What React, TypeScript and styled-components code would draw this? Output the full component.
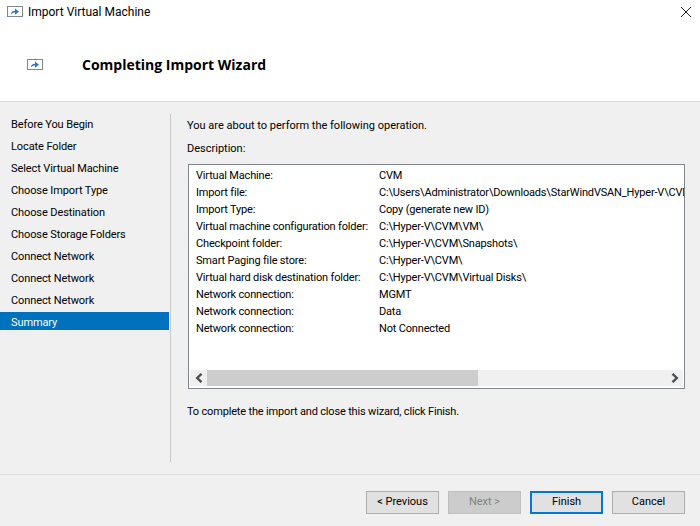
import React from "react";
import styled, { createGlobalStyle } from "styled-components";

const GlobalStyle = createGlobalStyle`
  html, body {
    margin: 0;
    padding: 0;
    background: #f0f0f0;
  }
  body {
    font-family: Roboto, "Open Sans", "Liberation Sans", sans-serif;
    font-size: 11px;
    color: #000000;
  }
`;

const steps = [
  "Before You Begin",
  "Locate Folder",
  "Select Virtual Machine",
  "Choose Import Type",
  "Choose Destination",
  "Choose Storage Folders",
  "Connect Network",
  "Connect Network",
  "Connect Network",
  "Summary",
];

const details = [
  ["Virtual Machine:", "CVM"],
  ["Import file:", "C:\\Users\\Administrator\\Downloads\\StarWindVSAN_Hyper-V\\CVM"],
  ["Import Type:", "Copy (generate new ID)"],
  ["Virtual machine configuration folder:", "C:\\Hyper-V\\CVM\\VM\\"],
  ["Checkpoint folder:", "C:\\Hyper-V\\CVM\\Snapshots\\"],
  ["Smart Paging file store:", "C:\\Hyper-V\\CVM\\"],
  ["Virtual hard disk destination folder:", "C:\\Hyper-V\\CVM\\Virtual Disks\\"],
  ["Network connection:", "MGMT"],
  ["Network connection:", "Data"],
  ["Network connection:", "Not Connected"],
];

const ImportIcon = () => (
  <svg width="16" height="11" viewBox="0 0 16 11">
    <rect x="0.5" y="0.5" width="15" height="10" fill="#ffffff" stroke="#7f8790" />
    <path d="M4 8.5C4 6 5.5 4.8 8 4.8V2.5l4 3.2-4 3V6.6C6.3 6.6 5.2 7.2 4 8.5z" fill="#2f75c8" />
  </svg>
);

const CloseIcon = () => (
  <svg width="10" height="10" viewBox="0 0 10 10">
    <path d="M0 0l10 10M10 0L0 10" fill="none" stroke="#1a1a1a" strokeWidth="1" />
  </svg>
);

const Chevron = ({ dir }: { dir: "left" | "right" }) => (
  <svg width="8" height="10" viewBox="0 0 8 10">
    <path
      d={dir === "left" ? "M6.5 0.8L2.2 5l4.3 4.2" : "M1.5 0.8L5.8 5 1.5 9.2"}
      fill="none"
      stroke="#505050"
      strokeWidth="2.4"
    />
  </svg>
);

export default function App() {
  return (
    <Window>
      <GlobalStyle />
      <TopArea>
        <TitleBar>
          <ImportIcon />
          <TitleText>Import Virtual Machine</TitleText>
          <CloseSlot>
            <CloseIcon />
          </CloseSlot>
        </TitleBar>
        <Banner>
          <ImportIcon />
          <Heading>Completing Import Wizard</Heading>
        </Banner>
      </TopArea>
      <Body>
        <Nav>
          {steps.map((step, i) => (
            <NavItem key={i} $active={step === "Summary"}>
              {step}
            </NavItem>
          ))}
        </Nav>
        <Content>
          <Intro>You are about to perform the following operation.</Intro>
          <DescLabel>Description:</DescLabel>
          <DetailBox>
            <DetailList>
              {details.map(([label, value], i) => (
                <DetailRow key={i}>
                  <span>{label}</span>
                  <DetailValue>{value}</DetailValue>
                </DetailRow>
              ))}
            </DetailList>
            <ScrollBar>
              <ScrollButton>
                <Chevron dir="left" />
              </ScrollButton>
              <ScrollTrack>
                <ScrollThumb />
              </ScrollTrack>
              <ScrollButton>
                <Chevron dir="right" />
              </ScrollButton>
            </ScrollBar>
          </DetailBox>
          <Outro>To complete the import and close this wizard, click Finish.</Outro>
        </Content>
      </Body>
      <Footer>
        <WizardButton>&lt; Previous</WizardButton>
        <WizardButton disabled>Next &gt;</WizardButton>
        <FinishButton>Finish</FinishButton>
        <WizardButton>Cancel</WizardButton>
      </Footer>
    </Window>
  );
}

const Window = styled.div`
  width: 700px;
  height: 526px;
  display: flex;
  flex-direction: column;
  overflow: hidden;
  background: #f0f0f0;
`;

const TopArea = styled.header`
  height: 101px;
  background: #ffffff;
  border-bottom: 1px solid #d9d9d9;
  flex-shrink: 0;
`;

const TitleBar = styled.div`
  height: 23px;
  padding: 0 9px 0 7px;
  display: flex;
  align-items: center;
  gap: 5px;
`;

const TitleText = styled.span`
  font-size: 12px;
`;

const CloseSlot = styled.div`
  margin-left: auto;
  display: flex;
`;

const Banner = styled.div`
  margin-top: 32px;
  padding-left: 27px;
  display: flex;
  align-items: center;
  gap: 39px;
`;

const Heading = styled.h1`
  margin: 0;
  font-family: "Open Sans", sans-serif;
  font-size: 14px;
  font-weight: 700;
  color: #000000;
`;

const Body = styled.main`
  height: 372px;
  display: flex;
  flex-shrink: 0;
`;

const Nav = styled.nav`
  width: 169px;
  margin: 10px 2px 0 0;
  height: 348px;
  display: flex;
  flex-direction: column;
  position: relative;
  letter-spacing: -0.1px;
  &::after {
    content: "";
    position: absolute;
    top: 2px;
    bottom: -2px;
    right: -2px;
    width: 1px;
    background: #c8c8c8;
  }
`;

const NavItem = styled.div<{ $active?: boolean }>`
  height: 18px;
  line-height: 22px;
  margin: 2px 0;
  padding-left: 11px;
  background: ${(p) => (p.$active ? "#0071bc" : "transparent")};
  color: ${(p) => (p.$active ? "#ffffff" : "#000000")};
`;

const Content = styled.section`
  flex: 1;
  padding: 15px 15px 0 16px;
  min-width: 0;
`;

const Intro = styled.p`
  margin: 0;
  line-height: 17px;
`;

const DescLabel = styled.p`
  margin: 6px 0 0;
  line-height: 17px;
`;

const DetailBox = styled.div`
  margin: 7px 0 0 1px;
  height: 225px;
  box-sizing: border-box;
  border: 1px solid #82878f;
  background: #ffffff;
  display: flex;
  flex-direction: column;
  overflow: hidden;
`;

const DetailList = styled.div`
  flex: 1;
  padding: 2px 0 0 7px;
  overflow: hidden;
`;

const DetailRow = styled.div`
  display: grid;
  grid-template-columns: 183px 1fr;
  height: 17px;
  line-height: 17px;
  white-space: nowrap;
  letter-spacing: -0.17px;
`;

const DetailValue = styled.span`
  overflow: hidden;
`;

const ScrollBar = styled.div`
  height: 16px;
  margin: 0 1px 2px;
  display: flex;
  background: #f0f0f0;
`;

const ScrollButton = styled.div`
  width: 17px;
  display: flex;
  align-items: center;
  justify-content: center;
`;

const ScrollTrack = styled.div`
  flex: 1;
`;

const ScrollThumb = styled.div`
  width: 271px;
  height: 100%;
  background: #cdcdcd;
`;

const Outro = styled.p`
  margin: 14px 0 0;
  line-height: 17px;
  letter-spacing: -0.17px;
`;

const Footer = styled.footer`
  flex: 1;
  border-top: 1px solid #dfdfdf;
  padding: 16px 15px 0 0;
  display: flex;
  justify-content: flex-end;
  align-items: flex-start;
  gap: 9px;
`;

const WizardButton = styled.button`
  width: 73px;
  height: 23px;
  padding: 0 0 2px;
  box-sizing: border-box;
  border: 1px solid #adadad;
  background: #e1e1e1;
  font: inherit;
  color: #000000;
  &:disabled {
    background: #cccccc;
    border-color: #bfbfbf;
    color: #838383;
  }
`;

const FinishButton = styled(WizardButton)`
  border: 2px solid #0078d7;
`;
